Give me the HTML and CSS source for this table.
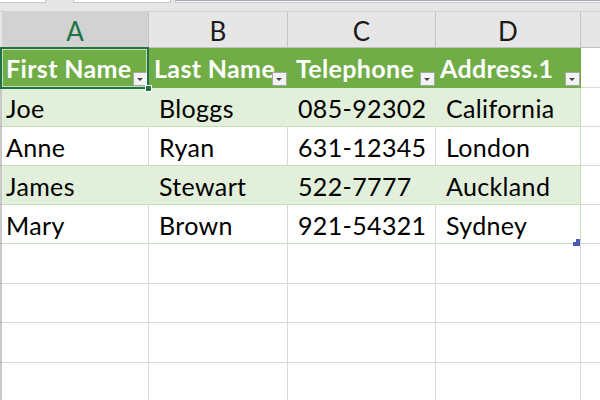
FILE: index.html
```html
<!DOCTYPE html>
<html>
<head>
<meta charset="utf-8">
<link rel="stylesheet" href="styles.css">
</head>
<body>
<div class="app">
  <div class="topstrip">
    <span class="fb fb1"></span><span class="fb fb2"></span><span class="fb fb3"></span>
  </div>
  <div class="sheet">
    <div class="strip head"></div>
    <div class="ch sel">A</div><div class="ch">B</div><div class="ch">C</div><div class="ch">D</div><div class="ch e"></div>

    <div class="strip"></div>
    <div class="c th ca">First Name<span class="dd"></span></div>
    <div class="c th cb">Last Name<span class="dd"></span></div>
    <div class="c th cc">Telephone<span class="dd"></span></div>
    <div class="c th cd">Address.1<span class="dd"></span></div>
    <div class="c e"></div>

    <div class="strip"></div>
    <div class="c band ca">Joe</div><div class="c band cb">Bloggs</div><div class="c band cc">085-92302</div><div class="c band cd">California</div><div class="c e"></div>

    <div class="strip"></div>
    <div class="c plain ca">Anne</div><div class="c plain cb">Ryan</div><div class="c plain cc">631-12345</div><div class="c plain cd">London</div><div class="c e"></div>

    <div class="strip"></div>
    <div class="c band ca">James</div><div class="c band cb">Stewart</div><div class="c band cc">522-7777</div><div class="c band cd">Auckland</div><div class="c e"></div>

    <div class="strip"></div>
    <div class="c plain ca">Mary</div><div class="c plain cb">Brown</div><div class="c plain cc">921-54321</div><div class="c plain cd">Sydney<span class="resize"><svg width="7" height="7" viewBox="0 0 7 7"><polygon points="3,0 7,0 7,7 0,7 0,3 3,3" fill="#4a5cb8"/></svg></span></div><div class="c e"></div>

    <div class="strip"></div><div class="c"></div><div class="c"></div><div class="c"></div><div class="c"></div><div class="c e"></div>
    <div class="strip"></div><div class="c"></div><div class="c"></div><div class="c"></div><div class="c"></div><div class="c e"></div>
    <div class="strip"></div><div class="c"></div><div class="c"></div><div class="c"></div><div class="c"></div><div class="c e"></div>
    <div class="strip"></div><div class="c"></div><div class="c"></div><div class="c"></div><div class="c"></div><div class="c e"></div>
  </div>
  <div class="selection"><span class="handle"></span></div>
</div>
</body>
</html>
```

FILE: styles.css
```css
html, body {
  margin: 0;
  padding: 0;
  background: #ffffff;
}
.app {
  position: relative;
  width: 600px;
  height: 400px;
  overflow: hidden;
  font-family: Lato, "Noto Sans", sans-serif;
}
.topstrip {
  height: 12px;
  box-sizing: border-box;
  background: #e6e6e6;
  border-bottom: 1px solid #d0d0d0;
  display: flex;
  align-items: flex-start;
}
.fb {
  height: 3px;
  background: #ffffff;
  border: 1px solid #c6c6c6;
  border-top: none;
  box-sizing: border-box;
}
.fb1 { width: 46px; border-left: none; }
.fb2 { width: 98px; margin-left: 27px; }
.fb3 { flex: 1; margin-left: 4px; border-top: 1px solid #a9a3bd; border-right: none; }
.sheet {
  display: grid;
  grid-template-columns: 2px 147px 139px 148px 145px 1fr;
  grid-template-rows: 36px 40px 39px 39px 39px 39px 40px 39px 40px 39px;
}
.strip {
  background: #c9c9c9;
  border-bottom: 1px solid #b5b5b5;
  box-sizing: border-box;
}
.strip.head {
  background: #e6e6e6;
  border-bottom: 1px solid #c0c0c0;
}
.ch {
  background: #e6e6e6;
  border-right: 1px solid #c4c4c4;
  border-bottom: 1px solid #c0c0c0;
  box-sizing: border-box;
  display: flex;
  align-items: center;
  justify-content: center;
  font-size: 26px;
  color: #1a1a1a;
  padding-top: 2px;
}
.ch.sel {
  background: #d2d2d2;
  color: #217346;
}
.ch.e { border-right: none; }
.c {
  position: relative;
  box-sizing: border-box;
  border-right: 1px solid #d9d9d9;
  border-bottom: 1px solid #d9d9d9;
  display: flex;
  align-items: flex-end;
  font-size: 25px;
  line-height: 25px;
  letter-spacing: 0.35px;
  padding-bottom: 5px;
  color: #000;
  white-space: nowrap;
}
.c.e { border-right: none; }
.th {
  background: #70ad47;
  color: #ffffff;
  font-weight: bold;
  border-right-color: #70ad47;
  border-bottom-color: #70ad47;
  padding-bottom: 6px;
}
.band {
  background: #e2efda;
  border-right-color: #e2efda;
  border-bottom-color: #c6e0b4;
}
.plain {
  border-bottom-color: #c6e0b4;
}
.band.cd, .plain.cd { border-right-color: #c6e0b4; }
.ca { padding-left: 4px; }
.cb { padding-left: 10px; }
.cc { padding-left: 10px; }
.cd { padding-left: 10px; }
.th.cb { padding-left: 5px; }
.th.cc { padding-left: 8px; }
.th.cd { padding-left: 4px; }
.dd {
  position: absolute;
  right: 0;
  bottom: 1px;
  width: 15px;
  height: 14px;
  box-sizing: border-box;
  background: #f3f3f3;
  border: 1px solid #a6a6a6;
}
.dd::after {
  content: "";
  position: absolute;
  left: 3px;
  top: 5px;
  border-left: 3.5px solid transparent;
  border-right: 3.5px solid transparent;
  border-top: 3px solid #444;
}
.resize {
  position: absolute;
  right: 0;
  bottom: 0;
  width: 7px;
  height: 7px;
  line-height: 0;
}
.selection {
  position: absolute;
  left: 0;
  top: 47px;
  width: 149px;
  height: 42px;
  box-sizing: border-box;
  border: 2px solid #217346;
  box-shadow: inset 0 0 0 1px rgba(255,255,255,0.6);
}
.handle {
  position: absolute;
  right: -5px;
  bottom: -5px;
  width: 5px;
  height: 5px;
  background: #217346;
  border: 1px solid #ffffff;
}
```
